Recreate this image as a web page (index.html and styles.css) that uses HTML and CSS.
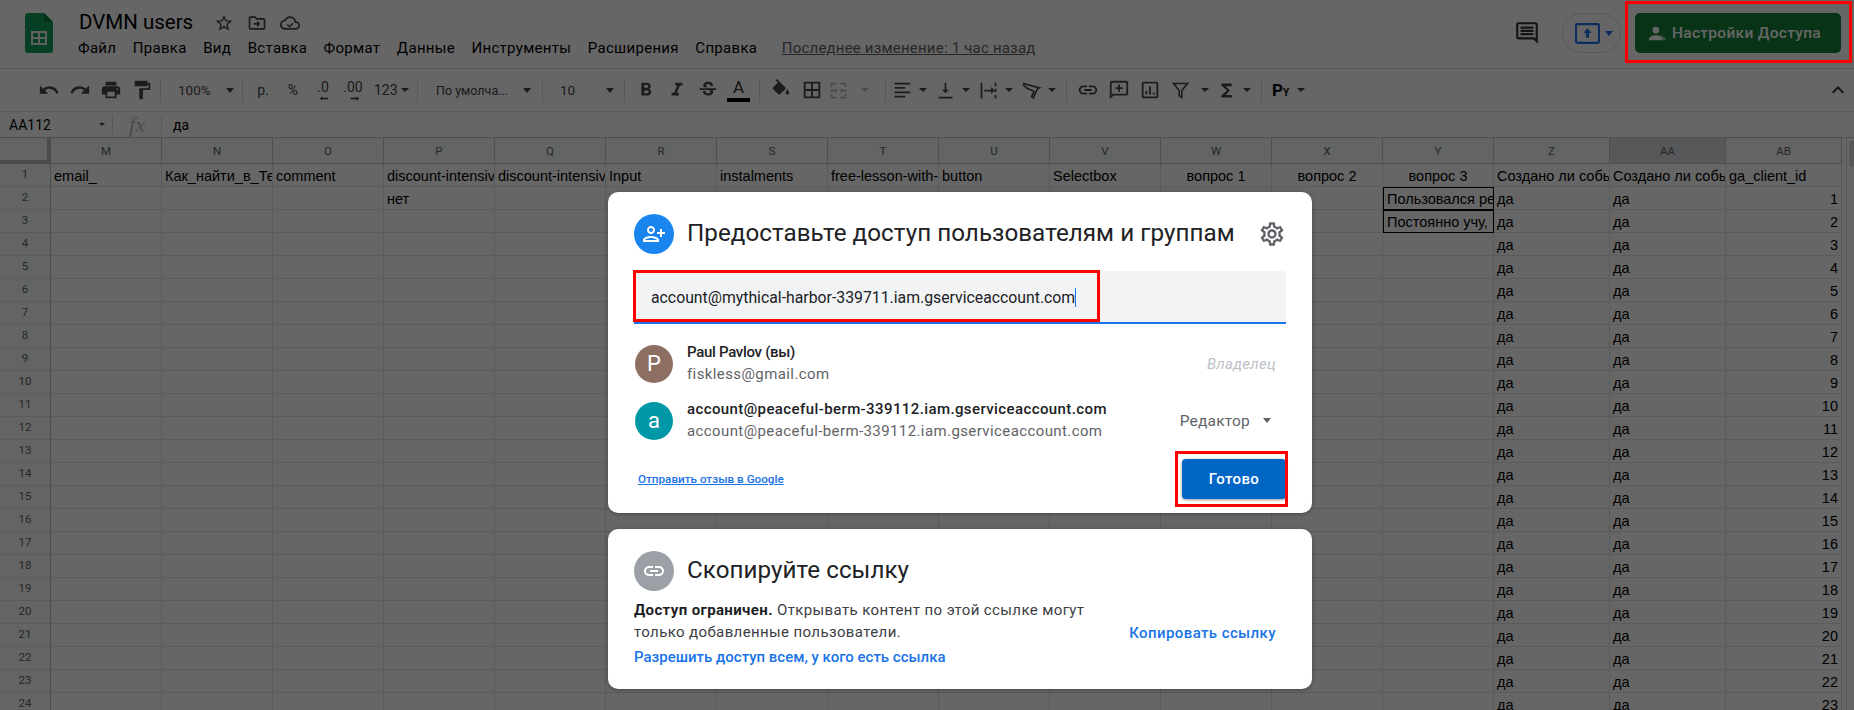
FILE: index.html
```html
<!DOCTYPE html>
<html lang="ru">
<head>
<meta charset="utf-8">
<title>DVMN users</title>
<link rel="stylesheet" href="styles.css">
</head>
<body>
<div class="app">
  <header class="topbar">
    <svg class="logo" viewBox="0 0 28 40"><path fill="#0f9d58" d="M3 0h16l9 9v28a3 3 0 0 1-3 3H3a3 3 0 0 1-3-3V3a3 3 0 0 1 3-3z"/><path fill="#0a7a42" d="M19 0l9 9h-9z"/><path fill="#f1f1f1" d="M6 18h16v14H6zm2 2v4h5v-4zm7 0v4h5v-4zm-7 6v4h5v-4zm7 0v4h5v-4z" fill-rule="evenodd"/></svg>
    <div class="docinfo">
      <div class="titlerow">
        <span class="doctitle">DVMN users</span>
        <span class="titleicons">
          <svg class="ti" viewBox="0 0 24 24"><path d="M22 9.24l-7.19-.62L12 2 9.19 8.63 2 9.24l5.46 4.73L5.82 21 12 17.27 18.18 21l-1.63-7.03L22 9.24zM12 15.4l-3.76 2.27 1-4.28-3.32-2.88 4.38-.38L12 6.1l1.71 4.04 4.38.38-3.32 2.88 1 4.28L12 15.4z"/></svg>
          <svg class="ti" viewBox="0 0 24 24"><path d="M20 6h-8l-2-2H4c-1.1 0-2 .9-2 2v12c0 1.1.9 2 2 2h16c1.1 0 2-.9 2-2V8c0-1.1-.9-2-2-2zm0 12H4V6h5.17l2 2H20v10zm-8-4H8v-2h4V9l4 4-4 4v-3z"/></svg>
          <svg class="ti" viewBox="0 0 24 24"><path d="M19.35 10.04C18.67 6.59 15.64 4 12 4 9.11 4 6.6 5.64 5.35 8.04 2.34 8.36 0 10.91 0 14c0 3.31 2.69 6 6 6h13c2.76 0 5-2.24 5-5 0-2.64-2.05-4.78-4.65-4.96zM19 18H6c-2.21 0-4-1.79-4-4 0-2.05 1.53-3.76 3.56-3.97l1.07-.11.5-.95C8.08 7.14 9.94 6 12 6c2.62 0 4.88 1.86 5.39 4.43l.3 1.5 1.53.11c1.56.1 2.78 1.41 2.78 2.96 0 1.65-1.35 3-3 3zm-7.5-2.6l-2.1-2.1-1.1 1.1 3.2 3.2 4.8-4.8-1.1-1.1z"/></svg>
        </span>
      </div>
      <nav class="menu">
        <span>Файл</span><span>Правка</span><span>Вид</span><span>Вставка</span><span>Формат</span><span>Данные</span><span>Инструменты</span><span>Расширения</span><span>Справка</span>
        <a class="lastedit">Последнее изменение: 1 час назад</a>
      </nav>
    </div>
    <div class="topright">
      <svg class="commenticon" viewBox="0 0 24 24"><path d="M21.99 4c0-1.1-.89-2-1.99-2H4c-1.1 0-2 .9-2 2v12c0 1.1.9 2 2 2h14l4 4-.01-18zM20 4v13.17L18.83 16H4V4h16zM6 12h12v2H6zm0-3h12v2H6zm0-3h12v2H6z"/></svg>
      <div class="present">
        <svg class="presenticon" viewBox="0 0 24 20"><rect x="1" y="1" width="22" height="18" rx="1" fill="none" stroke="#1a73e8" stroke-width="2"/><path fill="#1a73e8" d="M12 5l4 4.5h-2.5V14h-3V9.5H8z"/></svg>
        <i class="caret caret-blue"></i>
      </div>
      <button class="share">
        <svg class="shareicon" viewBox="0 0 20 20"><circle cx="8" cy="6" r="4" fill="#fff"/><path fill="#fff" d="M0 17c0-3.5 5-5 8-5s8 1.5 8 5v1H0z"/><path fill="#fff" opacity=".5" d="M12 12c3 .3 8 1.5 8 5v1h-4v-1c0-2-2-4-4-5z"/></svg>
        Настройки Доступа
      </button>
    </div>
  </header>

  <div class="toolbar">
    <div class="tg">
      <span class="tb"><svg viewBox="0 0 24 24"><path d="M12.5 8c-2.65 0-5.05.99-6.9 2.6L2 7v9h9l-3.62-3.62c1.39-1.16 3.16-1.88 5.12-1.88 3.54 0 6.55 2.31 7.6 5.5l2.37-.78C21.08 11.03 17.15 8 12.5 8z"/></svg></span>
      <span class="tb"><svg viewBox="0 0 24 24"><path d="M18.4 10.6C16.55 8.99 14.15 8 11.5 8c-4.65 0-8.58 3.03-9.96 7.22L3.9 16c1.05-3.19 4.05-5.5 7.6-5.5 1.95 0 3.73.72 5.12 1.88L13 16h9V7l-3.6 3.6z"/></svg></span>
      <span class="tb"><svg viewBox="0 0 24 24"><path d="M19 8H5c-1.66 0-3 1.34-3 3v6h4v4h12v-4h4v-6c0-1.66-1.34-3-3-3zm-3 11H8v-5h8v5zm3-7c-.55 0-1-.45-1-1s.45-1 1-1 1 .45 1 1-.45 1-1 1zm-1-9H6v4h12V3z"/></svg></span>
      <span class="tb"><svg viewBox="0 0 24 24"><path d="M18 4V3c0-.55-.45-1-1-1H5c-.55 0-1 .45-1 1v4c0 .55.45 1 1 1h12c.55 0 1-.45 1-1V6h1v4H9v11c0 .55.45 1 1 1h2c.55 0 1-.45 1-1v-9h8V4h-3z"/></svg></span>
    </div>
    <i class="sep"></i>
    <div class="sel sel-zoom"><span>100%</span><i class="caret"></i></div>
    <i class="sep"></i>
    <div class="tg fmt">
      <span class="tb tt">р.</span>
      <span class="tb tt">%</span>
      <span class="tb tt dec">.0<svg class="decarrow" viewBox="0 0 12 6"><path d="M0 3l3-3v2h8v2H3v2z"/></svg></span>
      <span class="tb tt dec">.00<svg class="decarrow" viewBox="0 0 12 6"><path d="M12 3L9 0v2H1v2h8v2z"/></svg></span>
      <span class="tb tt num">123<i class="caret"></i></span>
    </div>
    <i class="sep"></i>
    <div class="sel sel-font"><span>По умолча...</span><i class="caret"></i></div>
    <i class="sep"></i>
    <div class="sel sel-size"><span>10</span><i class="caret"></i></div>
    <i class="sep"></i>
    <div class="tg tg-text">
      <span class="tb"><svg viewBox="0 0 24 24"><path d="M15.6 10.79c.97-.67 1.65-1.77 1.65-2.79 0-2.26-1.75-4-4-4H7v14h7.04c2.09 0 3.71-1.7 3.71-3.79 0-1.52-.86-2.82-2.15-3.42zM10 6.5h3c.83 0 1.5.67 1.5 1.5s-.67 1.5-1.5 1.5h-3v-3zm3.5 9H10v-3h3.5c.83 0 1.5.67 1.5 1.5s-.67 1.5-1.5 1.5z"/></svg></span>
      <span class="tb"><svg viewBox="0 0 24 24"><path d="M10 4v3h2.21l-3.42 8H6v3h8v-3h-2.21l3.42-8H18V4z"/></svg></span>
      <span class="tb"><svg viewBox="0 0 24 24"><path d="M7.24 8.75c-.26-.48-.39-1.03-.39-1.67 0-.61.13-1.16.4-1.67.26-.5.63-.93 1.11-1.29.48-.35 1.05-.63 1.7-.83.66-.19 1.39-.29 2.18-.29.81 0 1.54.11 2.21.34.66.22 1.23.54 1.69.94.47.4.83.88 1.08 1.43.25.55.38 1.15.38 1.81h-3.01c0-.31-.05-.59-.15-.85-.09-.27-.24-.49-.44-.68-.2-.19-.45-.33-.75-.44-.3-.1-.66-.16-1.06-.16-.39 0-.74.04-1.03.13-.29.09-.53.21-.72.36-.19.16-.34.34-.44.55-.1.21-.15.43-.15.66 0 .48.25.88.74 1.21.38.25.77.48 1.41.7H7.39c-.05-.08-.11-.17-.15-.25zM21 12v-2H3v2h9.62c.18.07.4.14.55.2.37.17.66.34.87.51.21.17.35.36.43.57.07.2.11.43.11.69 0 .23-.05.45-.14.66-.09.2-.23.38-.42.53-.19.15-.42.26-.71.35-.29.08-.63.13-1.01.13-.43 0-.83-.04-1.18-.13s-.66-.23-.91-.42c-.25-.19-.45-.44-.59-.75-.14-.31-.25-.76-.25-1.21H6.4c0 .55.08 1.13.24 1.58.16.45.37.85.65 1.21.28.35.6.66.98.92.37.26.78.48 1.22.65.44.17.9.3 1.38.39.48.08.96.13 1.44.13.8 0 1.53-.09 2.18-.28s1.21-.45 1.67-.79c.46-.34.82-.77 1.07-1.27s.38-1.07.38-1.71c0-.6-.1-1.14-.31-1.61-.05-.11-.11-.23-.17-.33H21V12z"/></svg></span>
      <span class="tb textcolor"><span class="a">A</span><i class="colorbar"></i></span>
    </div>
    <i class="sep"></i>
    <div class="tg">
      <span class="tb"><svg viewBox="0 0 24 24"><path d="M16.56 8.94L7.62 0 6.21 1.41l2.38 2.38-5.15 5.15c-.59.59-.59 1.54 0 2.12l5.5 5.5c.29.29.68.44 1.06.44s.77-.15 1.06-.44l5.5-5.5c.59-.58.59-1.53 0-2.12zM19 11.5s-2 2.17-2 3.5c0 1.1.9 2 2 2s2-.9 2-2c0-1.33-2-3.5-2-3.5z"/></svg></span>
      <span class="tb"><svg viewBox="0 0 24 24"><path d="M3 3v18h18V3H3zm8 16H5v-6h6v6zm0-8H5V5h6v6zm8 8h-6v-6h6v6zm0-8h-6V5h6v6z"/></svg></span>
      <span class="tb wide muted"><svg viewBox="0 0 24 24"><path d="M3 3h7v2H5v3H3zM14 3h7v5h-2V5h-5zM3 16h2v3h5v2H3zM19 16h2v5h-7v-2h5zM3 11h5V9l3 3-3 3v-2H3zM21 13h-5v2l-3-3 3-3v2h5z"/></svg><i class="caret"></i></span>
    </div>
    <i class="sep"></i>
    <div class="tg">
      <span class="tb wide"><svg viewBox="0 0 24 24"><path d="M3 3h18v2H3zM3 8h12v2H3zM3 13h18v2H3zM3 18h12v2H3z"/></svg><i class="caret"></i></span>
      <span class="tb wide"><svg viewBox="0 0 24 24"><path d="M16 11h-3V3h-2v8H8l4 4zM4 19v2h16v-2z"/></svg><i class="caret"></i></span>
      <span class="tb wide"><svg viewBox="0 0 24 24"><path d="M3 3h2v18H3zM19 3h2v4h-2zM19 10h2v4h-2zM19 17h2v4h-2zM7 11h8V8l4 4-4 4v-3H7z"/></svg><i class="caret"></i></span>
      <span class="tb wide"><svg viewBox="0 0 24 24"><path d="M3 4l18 5-2 .7L16.5 15 14 20.5 12 19l3-6-8-3.6L3 6z" fill="none" stroke="#444" stroke-width="1.8"/></svg><i class="caret"></i></span>
    </div>
    <i class="sep"></i>
    <div class="tg">
      <span class="tb"><svg viewBox="0 0 24 24"><path d="M3.9 12c0-1.71 1.39-3.1 3.1-3.1h4V7H7c-2.76 0-5 2.24-5 5s2.24 5 5 5h4v-1.9H7c-1.71 0-3.1-1.39-3.1-3.1zM8 13h8v-2H8v2zm9-6h-4v1.9h4c1.71 0 3.1 1.39 3.1 3.1s-1.39 3.1-3.1 3.1h-4V17h4c2.76 0 5-2.24 5-5s-2.24-5-5-5z"/></svg></span>
      <span class="tb"><svg viewBox="0 0 24 24"><path d="M20 2H4c-1.1 0-2 .9-2 2v18l4-4h14c1.1 0 2-.9 2-2V4c0-1.1-.9-2-2-2zm0 14H5.17L4 17.17V4h16v12zM11 14h2v-3h3V9h-3V6h-2v3H8v2h3z"/></svg></span>
      <span class="tb"><svg viewBox="0 0 24 24"><path d="M19 3H5c-1.1 0-2 .9-2 2v14c0 1.1.9 2 2 2h14c1.1 0 2-.9 2-2V5c0-1.1-.9-2-2-2zm0 16H5V5h14v14zM7 13h2v4H7zm4-5h2v9h-2zm4 7h2v2h-2z"/></svg></span>
      <span class="tb wide filter"><svg viewBox="0 0 24 24"><path d="M4 4h16l-6.5 8v8l-3-2v-6z" fill="none" stroke="#444" stroke-width="1.8"/></svg><i class="caret"></i></span>
      <span class="tb wide"><svg viewBox="0 0 24 24"><path d="M18 4H6v2l6.5 6L6 18v2h12v-3h-7l5-5-5-5h7z"/></svg><i class="caret"></i></span>
    </div>
    <i class="sep"></i>
    <div class="tb wide input-tools"><span class="py">Р<small>Y</small></span><i class="caret"></i></div>
    <svg class="collapse" viewBox="0 0 24 24"><path d="M7.41 15.41L12 10.83l4.59 4.58L18 14l-6-6-6 6z"/></svg>
  </div>

  <div class="formulabar">
    <div class="namebox"><span>AA112</span><i class="caret"></i></div>
    <i class="fsep"></i>
    <span class="fx">fx</span>
    <i class="fsep"></i>
    <span class="fvalue">да</span>
  </div>

  <div class="gridwrap">
    <table class="sheet">
      <colgroup><col class="c-head"><col class="c-std"><col class="c-std"><col class="c-std"><col class="c-std"><col class="c-std"><col class="c-std"><col class="c-std"><col class="c-std"><col class="c-std"><col class="c-std"><col class="c-std"><col class="c-std"><col class="c-std"><col class="c-wide"><col class="c-wide"><col class="c-wide"></colgroup>
      <thead><tr><th class="corner"></th><th>M</th><th>N</th><th>O</th><th>P</th><th>Q</th><th>R</th><th>S</th><th>T</th><th>U</th><th>V</th><th>W</th><th>X</th><th>Y</th><th>Z</th><th class="activecol">AA</th><th>AB</th></tr></thead>
      <tbody>
        <tr><th>1</th><td>email_</td><td>Как_найти_в_Телеграм</td><td>comment</td><td>discount-intensive</td><td>discount-intensive</td><td>Input</td><td>instalments</td><td>free-lesson-with-mentor</td><td>button</td><td>Selectbox</td><td class="ctr">вопрос 1</td><td class="ctr">вопрос 2</td><td class="ctr">вопрос 3</td><td>Создано ли событие</td><td>Создано ли событие</td><td>ga_client_id</td></tr>
        <tr><th>2</th><td></td><td></td><td></td><td>нет</td><td></td><td></td><td></td><td></td><td></td><td></td><td></td><td></td><td class="boxed">Пользовался реактом</td><td>да</td><td>да</td><td class="num">1</td></tr>
        <tr><th>3</th><td></td><td></td><td></td><td></td><td></td><td></td><td></td><td></td><td></td><td></td><td></td><td></td><td class="boxed">Постоянно учу, практикую</td><td>да</td><td>да</td><td class="num">2</td></tr>
        <tr><th>4</th><td></td><td></td><td></td><td></td><td></td><td></td><td></td><td></td><td></td><td></td><td></td><td></td><td></td><td>да</td><td>да</td><td class="num">3</td></tr>
        <tr><th>5</th><td></td><td></td><td></td><td></td><td></td><td></td><td></td><td></td><td></td><td></td><td></td><td></td><td></td><td>да</td><td>да</td><td class="num">4</td></tr>
        <tr><th>6</th><td></td><td></td><td></td><td></td><td></td><td></td><td></td><td></td><td></td><td></td><td></td><td></td><td></td><td>да</td><td>да</td><td class="num">5</td></tr>
        <tr><th>7</th><td></td><td></td><td></td><td></td><td></td><td></td><td></td><td></td><td></td><td></td><td></td><td></td><td></td><td>да</td><td>да</td><td class="num">6</td></tr>
        <tr><th>8</th><td></td><td></td><td></td><td></td><td></td><td></td><td></td><td></td><td></td><td></td><td></td><td></td><td></td><td>да</td><td>да</td><td class="num">7</td></tr>
        <tr><th>9</th><td></td><td></td><td></td><td></td><td></td><td></td><td></td><td></td><td></td><td></td><td></td><td></td><td></td><td>да</td><td>да</td><td class="num">8</td></tr>
        <tr><th>10</th><td></td><td></td><td></td><td></td><td></td><td></td><td></td><td></td><td></td><td></td><td></td><td></td><td></td><td>да</td><td>да</td><td class="num">9</td></tr>
        <tr><th>11</th><td></td><td></td><td></td><td></td><td></td><td></td><td></td><td></td><td></td><td></td><td></td><td></td><td></td><td>да</td><td>да</td><td class="num">10</td></tr>
        <tr><th>12</th><td></td><td></td><td></td><td></td><td></td><td></td><td></td><td></td><td></td><td></td><td></td><td></td><td></td><td>да</td><td>да</td><td class="num">11</td></tr>
        <tr><th>13</th><td></td><td></td><td></td><td></td><td></td><td></td><td></td><td></td><td></td><td></td><td></td><td></td><td></td><td>да</td><td>да</td><td class="num">12</td></tr>
        <tr><th>14</th><td></td><td></td><td></td><td></td><td></td><td></td><td></td><td></td><td></td><td></td><td></td><td></td><td></td><td>да</td><td>да</td><td class="num">13</td></tr>
        <tr><th>15</th><td></td><td></td><td></td><td></td><td></td><td></td><td></td><td></td><td></td><td></td><td></td><td></td><td></td><td>да</td><td>да</td><td class="num">14</td></tr>
        <tr><th>16</th><td></td><td></td><td></td><td></td><td></td><td></td><td></td><td></td><td></td><td></td><td></td><td></td><td></td><td>да</td><td>да</td><td class="num">15</td></tr>
        <tr><th>17</th><td></td><td></td><td></td><td></td><td></td><td></td><td></td><td></td><td></td><td></td><td></td><td></td><td></td><td>да</td><td>да</td><td class="num">16</td></tr>
        <tr><th>18</th><td></td><td></td><td></td><td></td><td></td><td></td><td></td><td></td><td></td><td></td><td></td><td></td><td></td><td>да</td><td>да</td><td class="num">17</td></tr>
        <tr><th>19</th><td></td><td></td><td></td><td></td><td></td><td></td><td></td><td></td><td></td><td></td><td></td><td></td><td></td><td>да</td><td>да</td><td class="num">18</td></tr>
        <tr><th>20</th><td></td><td></td><td></td><td></td><td></td><td></td><td></td><td></td><td></td><td></td><td></td><td></td><td></td><td>да</td><td>да</td><td class="num">19</td></tr>
        <tr><th>21</th><td></td><td></td><td></td><td></td><td></td><td></td><td></td><td></td><td></td><td></td><td></td><td></td><td></td><td>да</td><td>да</td><td class="num">20</td></tr>
        <tr><th>22</th><td></td><td></td><td></td><td></td><td></td><td></td><td></td><td></td><td></td><td></td><td></td><td></td><td></td><td>да</td><td>да</td><td class="num">21</td></tr>
        <tr><th>23</th><td></td><td></td><td></td><td></td><td></td><td></td><td></td><td></td><td></td><td></td><td></td><td></td><td></td><td>да</td><td>да</td><td class="num">22</td></tr>
        <tr><th>24</th><td></td><td></td><td></td><td></td><td></td><td></td><td></td><td></td><td></td><td></td><td></td><td></td><td></td><td>да</td><td>да</td><td class="num">23</td></tr>
      </tbody>
    </table>
    <div class="scrollbar"><div class="thumb"></div></div>
  </div>
</div>

<div class="scrim"></div>
<div class="mark mark-share"></div>

<div class="dialog">
  <section class="card card-share">
    <div class="cardhead">
      <span class="badge badge-blue"><svg class="badgeicon" viewBox="0 0 24 24"><g transform="matrix(-1 0 0 1 24 0)"><path fill="#fff" d="M15 12c2.21 0 4-1.79 4-4s-1.79-4-4-4-4 1.79-4 4 1.79 4 4 4zm0-6c1.1 0 2 .9 2 2s-.9 2-2 2-2-.9-2-2 .9-2 2-2zm0 8c-2.67 0-8 1.34-8 4v2h16v-2c0-2.66-5.33-4-8-4zm-6 4c.22-.72 3.31-2 6-2 2.7 0 5.8 1.29 6 2H9zm-3-3v-3h3v-2H6V7H4v3H1v2h3v3z"/></g></svg></span>
      <h2 class="cardtitle">Предоставьте доступ пользователям и группам</h2>
      <svg class="gear" viewBox="0 0 24 24"><path d="M19.43 12.98c.04-.32.07-.64.07-.98 0-.34-.03-.66-.07-.98l2.11-1.65c.19-.15.24-.42.12-.64l-2-3.46c-.09-.16-.26-.25-.44-.25-.06 0-.12.01-.17.03l-2.49 1c-.52-.4-1.08-.73-1.69-.98l-.38-2.65C14.46 2.18 14.25 2 14 2h-4c-.25 0-.46.18-.49.42l-.38 2.65c-.61.25-1.17.59-1.69.98l-2.49-1c-.06-.02-.12-.03-.18-.03-.17 0-.34.09-.43.25l-2 3.46c-.13.22-.07.49.12.64l2.11 1.65c-.04.32-.07.65-.07.98 0 .33.03.66.07.98l-2.11 1.65c-.19.15-.24.42-.12.64l2 3.46c.09.16.26.25.44.25.06 0 .12-.01.17-.03l2.49-1c.52.4 1.08.73 1.69.98l.38 2.65c.03.24.24.42.49.42h4c.25 0 .46-.18.49-.42l.38-2.65c.61-.25 1.17-.59 1.69-.98l2.49 1c.06.02.12.03.18.03.17 0 .34-.09.43-.25l2-3.46c.12-.22.07-.49-.12-.64l-2.11-1.65zm-1.98-1.71c.04.31.05.52.05.73 0 .21-.02.43-.05.73l-.14 1.13.89.7 1.08.84-.7 1.21-1.27-.51-1.04-.42-.9.68c-.43.32-.84.56-1.25.73l-1.06.43-.16 1.13-.2 1.35h-1.4l-.19-1.35-.16-1.13-1.06-.43c-.43-.18-.83-.41-1.23-.71l-.91-.7-1.06.43-1.27.51-.7-1.21 1.08-.84.89-.7-.14-1.13c-.03-.31-.05-.54-.05-.74s.02-.43.05-.73l.14-1.13-.89-.7-1.08-.84.7-1.21 1.27.51 1.04.42.9-.68c.43-.32.84-.56 1.25-.73l1.06-.43.16-1.13.2-1.35h1.39l.19 1.35.16 1.13 1.06.43c.43.18.83.41 1.23.71l.91.7 1.06-.43 1.27-.51.7 1.21-1.07.85-.89.7.14 1.13zM12 8c-2.21 0-4 1.79-4 4s1.79 4 4 4 4-1.79 4-4-1.79-4-4-4zm0 6c-1.1 0-2-.9-2-2s.9-2 2-2 2 .9 2 2-.9 2-2 2z"/></svg>
    </div>
    <div class="field">
      <span class="fieldtext">account@mythical-harbor-339711.iam.gserviceaccount.com</span><i class="cursor"></i>
      <div class="mark mark-field"></div>
    </div>
    <ul class="people">
      <li class="person">
        <span class="avatar avatar-p">P</span>
        <div class="who"><div class="name">Paul Pavlov (вы)</div><div class="mail">fiskless@gmail.com</div></div>
        <span class="owner">Владелец</span>
      </li>
      <li class="person">
        <span class="avatar avatar-a">a</span>
        <div class="who"><div class="name">account@peaceful-berm-339112.iam.gserviceaccount.com</div><div class="mail">account@peaceful-berm-339112.iam.gserviceaccount.com</div></div>
        <span class="role">Редактор<i class="caret caret-role"></i></span>
      </li>
    </ul>
    <div class="cardfoot">
      <a class="feedback">Отправить отзыв в Google</a>
      <button class="done">Готово<span class="mark mark-done"></span></button>
    </div>
  </section>

  <section class="card card-link">
    <div class="cardhead">
      <span class="badge badge-grey"><svg class="badgeicon" viewBox="0 0 24 24"><path fill="#fff" d="M3.9 12c0-1.71 1.39-3.1 3.1-3.1h4V7H7c-2.76 0-5 2.24-5 5s2.24 5 5 5h4v-1.9H7c-1.71 0-3.1-1.39-3.1-3.1zM8 13h8v-2H8v2zm9-6h-4v1.9h4c1.71 0 3.1 1.39 3.1 3.1s-1.39 3.1-3.1 3.1h-4V17h4c2.76 0 5-2.24 5-5s-2.24-5-5-5z"/></svg></span>
      <h2 class="cardtitle">Скопируйте ссылку</h2>
    </div>
    <div class="linkbody">
      <div class="linktext">
        <p class="restrict"><b>Доступ ограничен.</b> Открывать контент по этой ссылке могут только добавленные пользователи.</p>
        <a class="allow">Разрешить доступ всем, у кого есть ссылка</a>
      </div>
      <a class="copy">Копировать ссылку</a>
    </div>
  </section>
</div>
</body>
</html>
```

FILE: styles.css
```css
* { box-sizing: border-box; }
html, body { margin: 0; height: 100%; overflow: hidden; background: #fff; }
body { font-family: Roboto, "Liberation Sans", sans-serif; color: #202124; position: relative; }
svg { display: block; fill: #444746; }
i { display: block; }

.app { display: flex; flex-direction: column; height: 710px; overflow: hidden; }

/* top bar */
.topbar { height: 69px; flex: none; display: flex; align-items: flex-start; border-bottom: 1px solid #dadce0; padding: 13px 13px 0 25px; }
.logo { width: 28px; height: 40px; flex: none; }
.docinfo { margin-left: 26px; margin-top: -3px; }
.titlerow { display: flex; align-items: center; height: 24px; }
.doctitle { font-size: 20.5px; line-height: 24px; color: #000; }
.titleicons { display: flex; gap: 13px; margin-left: 21px; margin-top: 2px; }
.ti { width: 20px; height: 20px; fill: #444; }
.menu { display: flex; align-items: center; gap: 16.5px; margin-top: 2px; margin-left: -1px; height: 24px; font-size: 15px; color: #000; letter-spacing: .3px; white-space: nowrap; }
.lastedit { margin-left: 8px; color: #5f6368; text-decoration: underline; letter-spacing: .2px; }
.topright { margin-left: auto; display: flex; align-items: center; height: 40px; }
.commenticon { width: 26px; height: 26px; fill: #333; margin-right: 22px; }
.present { width: 59px; height: 40px; border: 1px solid #dadce0; border-radius: 20px; display: flex; align-items: center; padding-left: 12px; gap: 5px; }
.presenticon { width: 25px; height: 23px; }
.share { margin-left: 14px; width: 206px; height: 40px; border: 0; border-radius: 5px; background: #188038; color: #fff; font: 500 15.5px Roboto, sans-serif; letter-spacing: .3px; display: flex; align-items: center; justify-content: flex-start; padding: 0 0 0 14px; gap: 6px; white-space: nowrap; }
.shareicon { width: 17px; height: 17px; }

.caret { width: 0; height: 0; border-left: 4.5px solid transparent; border-right: 4.5px solid transparent; border-top: 5px solid #444; flex: none; }
.caret-blue { border-top-color: #1a73e8; }

/* toolbar */
.toolbar { height: 43px; flex: none; display: flex; align-items: center; border-bottom: 1px solid #dadce0; padding-left: 33px; background: #fff; position: relative; }
.tg { display: flex; align-items: center; }
.tb { width: 31px; height: 28px; display: flex; align-items: center; justify-content: center; flex: none; position: relative; }
.tb svg { width: 22px; height: 22px; }
.tb.wide { width: 43px; gap: 6px; justify-content: flex-start; padding-left: 1px; }
.tb.wide svg { width: 21px; height: 21px; }
.tb .caret { border-left-width: 4px; border-right-width: 4px; border-top-width: 4.5px; }
.muted svg { opacity: .35; }
.muted .caret { opacity: .35; margin-left: 6px; }
.tb.muted { width: 55px; }
.tb.filter { width: 50px; padding-left: 5px; gap: 4px; }
.tb.filter .caret { margin-left: 6px; }
.sep { width: 1px; height: 24px; background: #dadce0; margin: 0 5px 0 3px; flex: none; }
.sel { display: flex; align-items: center; font-size: 13.5px; color: #444; height: 28px; flex: none; justify-content: space-between; }
.sel-zoom { width: 73px; padding: 0 5px 0 12px; }
.sel-font { width: 116px; padding: 0 8px 0 13px; font-size: 12.5px; }
.sel-size { width: 73px; padding: 0 7px 0 12px; }
.fmt .tb { width: 30px; }
.tt { font-size: 14px; color: #444; font-weight: 400; }
.tb.dec { flex-direction: column; justify-content: flex-start; line-height: 22px; }
.tb.dec svg.decarrow { width: 9px; height: 5px; position: absolute; left: 12px; top: 20px; fill: #333; }
.fmt .tb.num { width: 46px; gap: 3px; justify-content: flex-start; padding-left: 6px; }
.tg-text { padding-right: 2px; }
.textcolor { flex-direction: column; }
.a { font-size: 17px; line-height: 19px; color: #333; }
.colorbar { width: 23px; height: 4px; background: #000; margin-top: 1px; }
.input-tools { margin-left: 4px; }
.tb.input-tools { gap: 8px; }
.py { font: 700 17px Roboto, sans-serif; color: #000; }
.py small { font-size: 10px; }
.collapse { position: absolute; right: 4px; top: 9px; width: 24px; height: 24px; fill: #333; }

/* formula bar */
.formulabar { height: 26px; flex: none; display: flex; align-items: center; border-bottom: 1px solid #c4c7c5; font-size: 14px; }
.namebox { width: 112px; display: flex; align-items: center; justify-content: space-between; padding: 0 7px 0 9px; color: #000; }
.namebox .caret { border-left-width: 3px; border-right-width: 3px; border-top-width: 3.5px; }
.fsep { width: 1px; height: 20px; background: #dadce0; }
.fx { width: 48px; text-align: center; font: italic 22px "Liberation Serif", serif; color: #bbb; line-height: 22px; }
.fvalue { margin-left: 11px; color: #000; }

/* grid */
.gridwrap { flex: 1; display: flex; overflow: hidden; }
.sheet { table-layout: fixed; border-collapse: separate; border-spacing: 0; width: 1842px; flex: none; align-self: flex-start; }
.c-head { width: 51px; }
.c-std { width: 111px; }
.c-wide { width: 116px; }
.sheet th { background: #f8f9fa; font: 400 11.5px Roboto, sans-serif; color: #5f6368; border-right: 1px solid #c4c7c5; border-bottom: 1px solid #c4c7c5; padding: 0; overflow: hidden; }
.sheet thead th { height: 26px; padding-top: 1px; }
.sheet tbody th { height: 23px; border-bottom-color: #e2e3e3; padding-bottom: 2px; font-size: 11.5px; }
.sheet td { height: 23px; font: 14.5px "Liberation Sans", sans-serif; color: #000; border-right: 1px solid #e2e3e3; border-bottom: 1px solid #e2e3e3; padding: 2px 3px 0; white-space: nowrap; overflow: hidden; }
.sheet .corner { border-right: 4px solid #bcbfc3; border-bottom: 4px solid #bcbfc3; }
.sheet .activecol { background: #dadce0; }
.sheet .ctr { text-align: center; }
.sheet .num { text-align: right; }
.sheet .boxed { outline: 1px solid #000; outline-offset: -1px; padding-left: 4px; }
.scrollbar { flex: 1; margin-left: 4px; border-left: 1px solid #dadce0; padding: 3px 0 0 2px; background: #fff; }
.thumb { height: 26px; background: #dadce0; border-radius: 3px 0 0 3px; }

/* dim layer */
.scrim { position: absolute; inset: 0; background: rgba(0, 0, 0, .6); }
.mark { position: absolute; border: 3px solid #f00; pointer-events: none; }
.mark-share { left: 1625px; top: 1px; width: 227px; height: 62px; }

/* dialog */
.dialog { position: absolute; left: 608px; top: 192px; width: 704px; display: flex; flex-direction: column; gap: 16px; }
.card { background: #fff; border-radius: 10px; box-shadow: 0 1px 4px rgba(0, 0, 0, .3); padding: 22px 26px 14px; }
.card-share { height: 321px; }
.card-link { height: 160px; padding-bottom: 0; }
.cardhead { display: flex; align-items: center; height: 40px; }
.badge { width: 40px; height: 40px; border-radius: 50%; flex: none; display: flex; align-items: center; justify-content: center; }
.badge-blue { background: #1a85ee; }
.badge-grey { background: #9aa0a6; }
.badgeicon { width: 24px; height: 24px; }
.cardtitle { margin: 0 0 0 13px; padding-bottom: 2px; font: 400 24.2px Roboto, sans-serif; letter-spacing: .05px; color: #202124; white-space: nowrap; }
.gear { margin-left: auto; width: 28px; height: 28px; fill: #5f6368; }

.field { position: relative; margin-top: 17px; height: 53px; background: #f1f3f4; border-radius: 4px 4px 0 0; border-bottom: 2px solid #1a73e8; display: flex; align-items: center; padding-left: 17px; padding-top: 1px; }
.fieldtext { font-size: 15.8px; color: #202124; white-space: nowrap; }
.cursor { width: 1px; height: 19px; background: #1a73e8; }
.mark-field { left: -1px; top: -1px; width: 467px; height: 52px; }

.people { list-style: none; margin: 11px 0 0; padding: 0; }
.person { display: flex; align-items: center; height: 57px; }
.avatar { width: 38px; height: 38px; border-radius: 50%; margin-left: 1px; flex: none; color: #fff; font-size: 22px; display: flex; align-items: center; justify-content: center; }
.avatar-p { background: #8d6e63; }
.avatar-a { background: #0097a7; }
.who { margin-left: 14px; flex: 1; padding-bottom: 1px; }
.name { font-size: 15px; letter-spacing: .4px; font-weight: 500; line-height: 22px; color: #202124; }
.person:first-child .name { letter-spacing: -.3px; }
.mail { font-size: 15px; letter-spacing: .4px; line-height: 22px; color: #5f6368; }
.owner { font-size: 15px; letter-spacing: .3px; font-style: italic; color: #bdc1c6; margin-right: 10px; }
.role { font-size: 15.5px; letter-spacing: .2px; color: #5f6368; display: flex; align-items: center; gap: 13px; margin-right: 15px; }
.caret-role { border-top-color: #5f6368; }

.cardfoot { display: flex; align-items: center; justify-content: space-between; margin-top: 10px; }
.feedback { margin-left: 4px; font-size: 11.7px; font-weight: 500; color: #1a73e8; text-decoration: underline; }
.done { position: relative; width: 104px; height: 40px; border: 0; border-radius: 4px; background: #0066c6; color: #fff; font: 500 15px Roboto, sans-serif; letter-spacing: .4px; box-shadow: 0 1px 3px rgba(0, 0, 0, .4); }
.mark-done { left: -7px; top: -8px; width: 113px; height: 56px; }

.linkbody { display: flex; align-items: center; justify-content: space-between; margin-top: 9px; }
.linktext { width: 470px; }
.restrict { margin: 0; font-size: 15px; letter-spacing: .38px; line-height: 21.5px; color: #3c4043; }
.restrict b { font-weight: 700; color: #202124; }
.allow { display: block; margin-top: 5px; font-size: 15px; font-weight: 500; color: #1a73e8; }
.copy { font-size: 15px; letter-spacing: .4px; font-weight: 500; color: #1a73e8; margin-right: 10px; }
```
